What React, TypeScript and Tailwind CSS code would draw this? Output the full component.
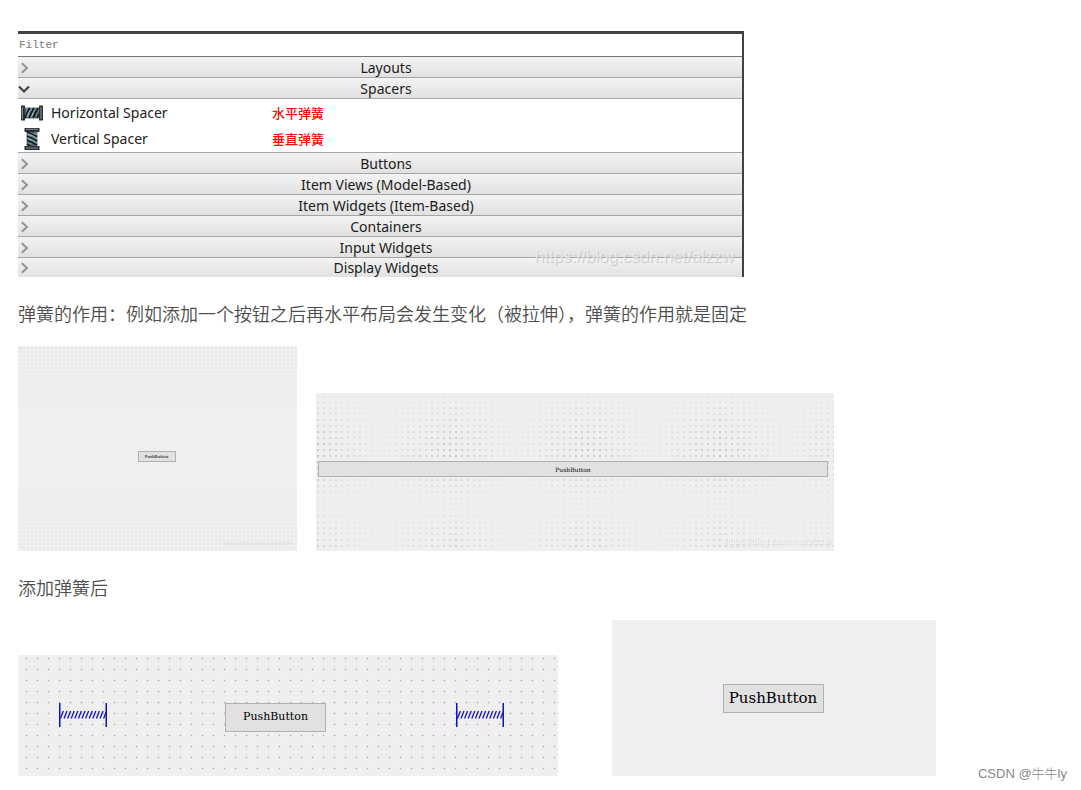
import React from "react";

const uiFont = "font-['Noto_Sans','Noto_Sans_CJK_SC',sans-serif]";

function Chevron({ open = false }: { open?: boolean }) {
  return open ? (
    <svg width="14" height="12" viewBox="0 0 14 12" fill="none" className="shrink-0" aria-hidden="true">
      <path d="M1 3.5 L6 8.5 L11 3.5" stroke="#444" strokeWidth="2.2" />
    </svg>
  ) : (
    <svg width="14" height="12" viewBox="0 0 14 12" fill="none" className="shrink-0" aria-hidden="true">
      <path d="M3.8 1.2 L9 6 L3.8 10.8" stroke="#949494" strokeWidth="2" />
    </svg>
  );
}

function Category({ name, open = false }: { name: string; open?: boolean }) {
  return (
    <button
      type="button"
      aria-expanded={open}
      className="flex h-[21px] w-full items-center border-b border-[#a5a5a5] bg-linear-to-b from-[#f3f3f3] to-[#e1e1e1] pt-px text-sm leading-5 text-[#1c1c1c] last:h-[19px] last:border-b-0"
    >
      <Chevron open={open} />
      <span className="flex-1 pr-[14px] pl-3 text-center">{name}</span>
    </button>
  );
}

function SpacerIcon({ vertical = false }: { vertical?: boolean }) {
  return (
    <svg width="24" height="24" viewBox="0 0 24 24" fill="none" className="shrink-0" aria-hidden="true">
      <g transform={vertical ? "rotate(90 12 12)" : undefined}>
        <rect x="1" y="4.5" width="4" height="15" rx="0.5" fill="#2b2f31" />
        <rect x="19" y="4.5" width="4" height="15" rx="0.5" fill="#2b2f31" />
        <rect x="5" y="6.500" width="14" height="11" fill="#7c929c" />
        <path d="M2.3 6 V18 M21 6 V18" stroke="#8b9194" strokeWidth="1.1" />
        <path d="M5 7 L7 17 M9 7 L11.500 17 M13 7 L15.500 17 M17 7 L19 15" stroke="#47606c" strokeWidth="1.500" />
        <path d="M5 17 L9.500 7 M9 17 L14 7 M13 17 L18 7 M17 17 L19 13" stroke="#141c20" strokeWidth="1.900" />
        <path d="M6.800 16 L10 9 M11 16 L14.500 9" stroke="#b4d0da" strokeWidth="0.800" />
      </g>
    </svg>
  );
}

function SpacerItem({ name, note, vertical = false }: { name: string; note: string; vertical?: boolean }) {
  return (
    <li className="flex h-[26px] items-center pl-[2px] text-sm text-[#222]">
      <SpacerIcon vertical={vertical} />
      <span className="w-[228px] pl-[7px]">{name}</span>
      <span className="text-[13px] font-medium text-[#f80a0a]">{note}</span>
    </li>
  );
}

function WidgetBox() {
  return (
    <section className={`w-[726px] max-w-full border-t-[3px] border-r-2 border-[#424244] ${uiFont}`}>
      <div className="relative">
        <input
          aria-label="Filter"
          placeholder="Filter"
          className="block h-[23px] w-full border-b border-[#777] bg-white px-px font-['Liberation_Mono',monospace] text-[11px] text-[#777] outline-none placeholder:text-[#777]"
        />
        <Category name="Layouts" />
        <Category name="Spacers" open />
        <ul className="border-b border-[#a5a5a5] pt-px">
          <SpacerItem name="Horizontal Spacer" note="水平弹簧" />
          <SpacerItem name="Vertical Spacer" note="垂直弹簧" vertical />
        </ul>
        <div>
          <Category name="Buttons" />
          <Category name="Item Views (Model-Based)" />
          <Category name="Item Widgets (Item-Based)" />
          <Category name="Containers" />
          <Category name="Input Widgets" />
          <Category name="Display Widgets" />
        </div>
        <span className="absolute right-2 bottom-2 font-['Liberation_Sans',sans-serif] text-[17px] leading-6 text-white/50 [text-shadow:1px_1px_1px_#c4c4c4]">
          https://blog.csdn.net/alzzw
        </span>
      </div>
    </section>
  );
}

function PushButton({ className }: { className: string }) {
  return (
    <button
      type="button"
      className={`flex shrink-0 items-center justify-center border border-[#b0b0b0] bg-[#e1e1e1] font-['DejaVu_Serif',serif] whitespace-nowrap text-black ${className}`}
    >
      PushButton
    </button>
  );
}

function FormSpacer() {
  const coils = Array.from({ length: 13 }, (_, i) => 3 + i * 3.6);
  return (
    <svg width="48" height="24" viewBox="0 0 48 24" fill="none" stroke="#1010c4" className="shrink-0" aria-hidden="true">
      <path d="M0.75 0 V24 M47.25 0 V24" strokeWidth="1.5" />
      {coils.map((x) => (
        <path key={x} d={`M${x - 1.6} 15.5 L${x + 1.4} 8`} strokeWidth="1.3" />
      ))}
    </svg>
  );
}

export default function App() {
  return (
    <main className="relative min-h-screen bg-white px-[18px] pt-[31px] pb-[14px] font-['Noto_Sans_CJK_SC',sans-serif] text-[#4d4d4d]">
      <WidgetBox />

      <p className="mt-[22px] text-lg leading-7 font-[350]">
        弹簧的作用：例如添加一个按钮之后再水平布局会发生变化（被拉伸），弹簧的作用就是固定
      </p>

      <div className="mt-[19px] flex items-end gap-[19px]">
        <div className="relative flex h-[205px] w-[279px] items-center justify-center bg-[#efefef] bg-[linear-gradient(180deg,#efefef00,#efefef_30%,#efefef_70%,#efefef00),radial-gradient(circle,#e0e0e0_0.5px,transparent_1px)] bg-[size:100%_100%,4px_4px] pt-4 pr-[2px]">
          <PushButton className="h-[11px] w-[38px] text-[4px]" />
          <span className="absolute right-1 bottom-1 font-['Liberation_Sans',sans-serif] text-[6px] leading-2 text-[#dedede]">
            https://blog.csdn.net/alzzw
          </span>
        </div>
        <div className="relative flex h-[158px] w-[518px] flex-col justify-center bg-[#efefef] bg-[linear-gradient(180deg,#efefefcc,#efefef00_35%,#efefef00_45%,#efefefdd_70%,#efefef33),repeating-linear-gradient(90deg,#efefef00_0px,#efefefdd_65px,#efefef00_135px),radial-gradient(circle,#acacac_0.5px,transparent_1px)] bg-[size:100%_100%,100%_100%,6px_6px] bg-[position:0_0,0_0,-1px_0] pr-[6px] pb-[6px] pl-[2px]">
          <PushButton className="h-4 w-full text-[6px]" />
          <span className="absolute right-1 bottom-1 font-['Liberation_Sans',sans-serif] text-[9px] leading-3 text-white/70 [text-shadow:1px_1px_1px_#d0d0d0]">
            https://blog.csdn.net/alzzw
          </span>
        </div>
      </div>

      <p className="mt-[22px] text-lg leading-7 font-[350]">添加弹簧后</p>

      <div className="mt-[19px] flex items-end gap-[54px]">
        <div className="flex h-[121px] w-[540px] items-start bg-[#efefef] bg-[radial-gradient(circle,#b0b0b0_0.5px,transparent_1.2px)] bg-[size:11px_11px] bg-[position:3px_-2px] pt-12 pl-[41px]">
          <FormSpacer />
          <PushButton className="mr-[130px] ml-[118px] h-[29px] w-[101px] text-[11px]" />
          <FormSpacer />
        </div>
        <div className="flex h-[156px] w-[324px] items-center justify-center bg-[#efefef] pr-[2px]">
          <PushButton className="h-[29px] w-[101px] text-[15px]" />
        </div>
      </div>

      <span className="absolute right-[14px] bottom-2 font-['Liberation_Sans','Noto_Sans_CJK_SC',sans-serif] text-[13px] leading-4 font-light text-[#888]">
        CSDN @牛牛ly
      </span>
    </main>
  );
}
